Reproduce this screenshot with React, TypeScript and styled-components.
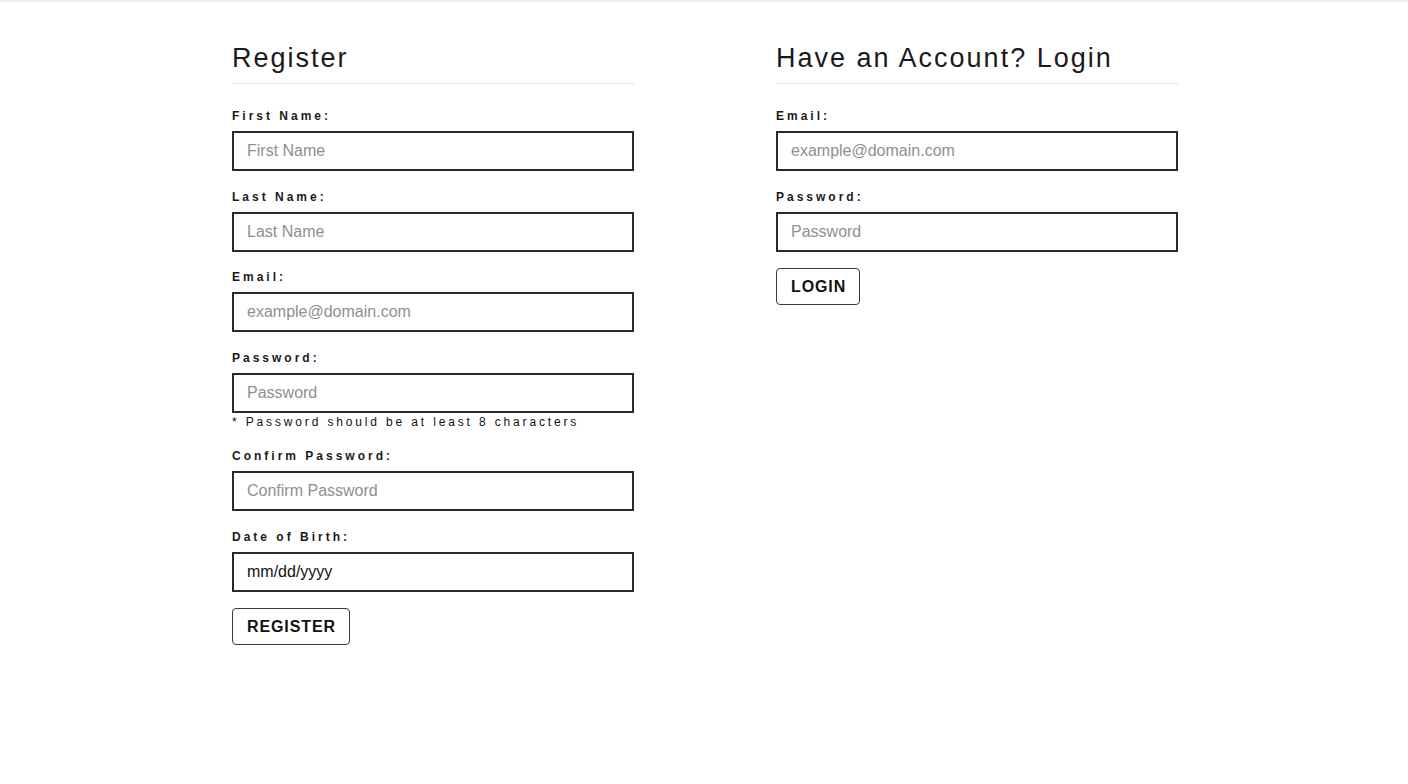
import React from "react";
import styled, { createGlobalStyle } from "styled-components";

const GlobalStyle = createGlobalStyle`
  * {
    box-sizing: border-box;
  }
  html,
  body {
    margin: 0;
    padding: 0;
    background: #fff;
    font-family: "Liberation Sans", Arial, sans-serif;
    color: #111;
  }
`;

const Page = styled.div`
  min-height: 784px;
  padding: 42px 0 0 2px;
  box-shadow: inset 0 3px 3px -2px rgba(0, 0, 0, 0.12);
`;

const Columns = styled.div`
  display: grid;
  grid-template-columns: 402px 402px;
  column-gap: 142px;
  justify-content: center;
  align-items: start;
`;

const Section = styled.section`
  display: flex;
  flex-direction: column;
`;

const Heading = styled.h2`
  margin: 0 0 24px;
  padding-bottom: 9px;
  border-bottom: 1px solid #e4e4e4;
  font-size: 27px;
  line-height: 32px;
  font-weight: normal;
  letter-spacing: 2px;
  color: #1a1a1a;
`;

const Field = styled.div`
  display: flex;
  flex-direction: column;
  margin-bottom: 17.5px;
`;

const Label = styled.label`
  font-size: 12px;
  line-height: 16px;
  font-weight: bold;
  letter-spacing: 3px;
  color: #1a1a1a;
  margin-bottom: 7px;
`;

const Input = styled.input<{ $filled?: boolean }>`
  width: 100%;
  height: 40px;
  padding: 0 13px;
  border: 2px solid #2a2a2a;
  border-radius: 0;
  outline: none;
  font-family: "Liberation Sans", Arial, sans-serif;
  font-size: 16px;
  color: #111;
  background: #fff;

  &::placeholder {
    color: ${(p) => (p.$filled ? "#111" : "#8f8f8f")};
    opacity: 1;
  }
`;

const Hint = styled.p`
  margin: 1px 0 0;
  font-size: 12px;
  line-height: 17px;
  letter-spacing: 2.85px;
  color: #111;
`;

const Button = styled.button`
  align-self: flex-start;
  height: 37px;
  margin-top: -1px;
  padding: 0 13px 0 14px;
  border: 1.5px solid #3a3a3a;
  border-radius: 4px;
  background: #fff;
  font-family: "Liberation Sans", Arial, sans-serif;
  font-size: 16px;
  font-weight: bold;
  letter-spacing: 0.9px;
  color: #111;
  cursor: pointer;
`;

type FieldDef = {
  label: string;
  placeholder: string;
  type?: string;
  hint?: string;
  filled?: boolean;
};

const registerFields: FieldDef[] = [
  { label: "First Name:", placeholder: "First Name" },
  { label: "Last Name:", placeholder: "Last Name" },
  { label: "Email:", placeholder: "example@domain.com", type: "email" },
  {
    label: "Password:",
    placeholder: "Password",
    type: "password",
    hint: "* Password should be at least 8 characters",
  },
  { label: "Confirm Password:", placeholder: "Confirm Password", type: "password" },
  { label: "Date of Birth:", placeholder: "mm/dd/yyyy", filled: true },
];

const loginFields: FieldDef[] = [
  { label: "Email:", placeholder: "example@domain.com", type: "email" },
  { label: "Password:", placeholder: "Password", type: "password" },
];

const FormField = ({ field }: { field: FieldDef }) => (
  <Field>
    <Label>{field.label}</Label>
    <Input
      type={field.type || "text"}
      placeholder={field.placeholder}
      $filled={field.filled}
    />
    {field.hint && <Hint>{field.hint}</Hint>}
  </Field>
);

const App = () => {
  return (
    <>
      <GlobalStyle />
      <Page>
        <Columns>
          <Section>
            <Heading>Register</Heading>
            {registerFields.map((f) => (
              <FormField key={f.label} field={f} />
            ))}
            <Button>REGISTER</Button>
          </Section>
          <Section>
            <Heading>Have an Account? Login</Heading>
            {loginFields.map((f) => (
              <FormField key={f.label} field={f} />
            ))}
            <Button>LOGIN</Button>
          </Section>
        </Columns>
      </Page>
    </>
  );
};

export default App;
